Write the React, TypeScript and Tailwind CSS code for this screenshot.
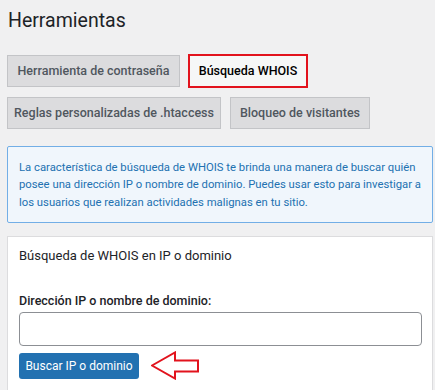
export default function App() {
  const font = { fontFamily: 'Roboto, "Liberation Sans", sans-serif' };

  return (
    <div
      className="w-[435px] h-[390px] overflow-hidden bg-[#f0f0f1] px-[7px] text-[#1d2327]"
      style={font}
    >
      <h1 className="pt-[8px] pl-[1px] text-[19.5px] leading-[26px] font-normal text-[#1d2327]">
        Herramientas
      </h1>

      {/* tabs */}
      <div className="mt-[20px] flex flex-col gap-[9px]">
        <div className="flex items-center gap-[8px]">
          <div className="flex h-[32px] w-[173px] items-center justify-center whitespace-nowrap border border-[#c3c4c7] bg-[#dcdcde] text-[12.5px] font-medium text-[#50575e]">
            Herramienta de contraseña
          </div>
          <div className="flex h-[34px] w-[120px] items-center justify-center whitespace-nowrap border-2 border-[#e2131d] bg-[#f6f7f7] text-[12.5px] font-medium text-black">
            Búsqueda WHOIS
          </div>
        </div>
        <div className="flex items-center gap-[9px]">
          <div className="flex h-[32px] w-[214px] items-center justify-center whitespace-nowrap border border-[#c3c4c7] bg-[#dcdcde] text-[12.5px] font-medium text-[#50575e]">
            Reglas personalizadas de .htaccess
          </div>
          <div className="flex h-[32px] w-[140px] items-center justify-center whitespace-nowrap border border-[#c3c4c7] bg-[#dcdcde] text-[12.5px] font-medium text-[#50575e]">
            Bloqueo de visitantes
          </div>
        </div>
      </div>

      {/* info notice */}
      <div className="mt-[17px] w-[426px] rounded-[2px] border border-[#72aee6] bg-[#f0f6fc] pl-[11px] pt-[11.5px] pb-[11px] text-[11.3px] leading-[17.5px] text-[#2271b1]">
        <p className="whitespace-nowrap">
          La característica de búsqueda de WHOIS te brinda una manera de buscar quién
          <br />
          posee una dirección IP o nombre de dominio. Puedes usar esto para investigar a
          <br />
          los usuarios que realizan actividades malignas en tu sitio.
        </p>
      </div>

      {/* lookup card */}
      <div className="mt-[13px] w-[426px] border border-[#dcdcde] bg-white px-[11px] pt-[8.5px] pb-[20px]">
        <h2 className="text-[13px] leading-[20px] font-normal text-[#1d2327]">
          Búsqueda de WHOIS en IP o dominio
        </h2>
        <label className="mt-[26px] block text-[12.5px] leading-[18px] font-medium text-[#1d2327]">
          Dirección IP o nombre de dominio:
        </label>
        <input
          type="text"
          className="mt-[2px] block h-[34px] w-[403px] rounded-[4px] border border-[#8c8f94] bg-white px-2 outline-none"
        />
        <div className="mt-[7px] flex items-center gap-[12px]">
          <button className="h-[26px] w-[120px] whitespace-nowrap rounded-[3px] bg-[#2271b1] text-[12px] text-white">
            Buscar IP o dominio
          </button>
          <svg width="49" height="29" viewBox="0 0 49 29" className="-mt-[2px]">
            <path
              d="M1 14.5 L24 1.5 L24 9.5 L47 9.5 L47 20.5 L24 20.5 L24 27.5 Z"
              fill="none"
              stroke="#e2131d"
              strokeWidth="2"
              strokeLinejoin="miter"
            />
          </svg>
        </div>
      </div>
    </div>
  );
}
